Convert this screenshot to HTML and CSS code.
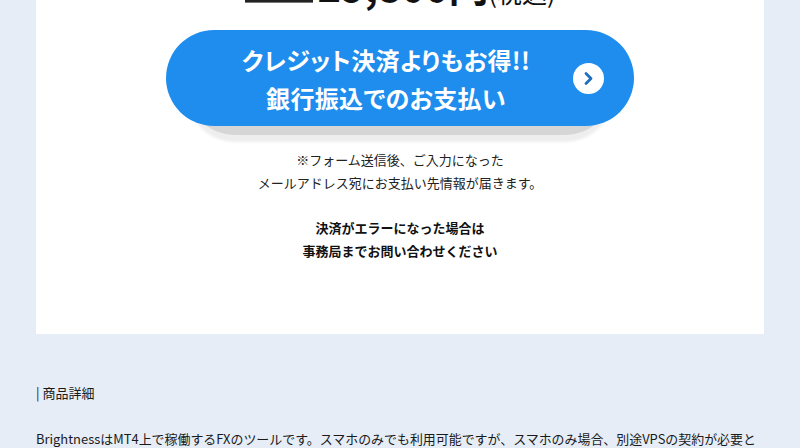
FILE: index.html
```html
<!DOCTYPE html>
<html lang="ja">
<head>
<meta charset="utf-8">
<title>商品詳細</title>
<link rel="stylesheet" href="styles.css">
</head>
<body>
<main class="page">
  <section class="card">
    <p class="price"><span class="price-label"></span><span class="price-num">29,800円</span><span class="price-tax">(税込)</span></p>
    <a class="cta" href="#">
      <span class="cta-text">クレジット決済よりもお得!!<br>銀行振込でのお支払い</span>
      <svg class="cta-icon" viewBox="0 0 31 31" width="31" height="31" aria-hidden="true">
        <circle cx="15.5" cy="15.5" r="15.5" fill="#fff"/>
        <path d="M13 10.5l5 5-5 5" fill="none" stroke="#1e6fc0" stroke-width="2.8" stroke-linecap="round" stroke-linejoin="round"/>
      </svg>
    </a>
    <p class="note">※フォーム送信後、ご入力になった<br>メールアドレス宛にお支払い先情報が届きます。</p>
    <p class="note note-strong">決済がエラーになった場合は<br>事務局までお問い合わせください</p>
  </section>
  <section class="details">
    <h2 class="details-title">| 商品詳細</h2>
    <p class="details-text">BrightnessはMT4上で稼働するFXのツールです。スマホのみでも利用可能ですが、スマホのみ場合、別途VPSの契約が必要となります。</p>
  </section>
</main>
</body>
</html>
```

FILE: styles.css
```css
html, body {
  margin: 0;
  height: 448px;
  overflow: hidden;
  background: #e6edf7;
}
body {
  font-family: "Noto Sans CJK JP", "Noto Sans", sans-serif;
  color: #1a1a1a;
}
.page {
  margin-top: -24px;
  padding: 0 36px;
}
.card {
  background: #fff;
  height: 358px;
  display: flex;
  flex-direction: column;
  align-items: center;
  isolation: isolate;
}
.price {
  margin: 0;
  height: 54px;
  display: flex;
  align-items: flex-end;
  box-sizing: border-box;
  padding-bottom: 25px;
  font-weight: 700;
  white-space: nowrap;
  color: #111;
  line-height: 1;
}
.price-label {
  width: 68px;
  height: 12px;
  margin: 0 5px 2px 0;
  background: #222;
  border-bottom: 1px solid #777;
  box-sizing: border-box;
}
.price-num {
  font-size: 40px;
}
.price-tax {
  font-size: 25px;
  font-weight: 400;
}
.cta {
  position: relative;
  width: 468px;
  height: 96px;
  box-sizing: border-box;
  border-radius: 48px;
  background: #1e8ded;
  color: #fff;
  text-decoration: none;
  display: flex;
  align-items: center;
  padding: 0 30px 0 0;
}
.cta::before {
  content: "";
  position: absolute;
  z-index: -1;
  left: 21px;
  right: 21px;
  top: 9px;
  height: 96px;
  border-radius: 48px;
  background: #d6d6d6;
  box-shadow: 0 7px 3px #eeeeee;
}
.cta-text {
  flex: 1;
  text-align: center;
  font-size: 24px;
  line-height: 38px;
  font-weight: 700;
  font-feature-settings: "palt";
  letter-spacing: 0.35px;
  padding: 2px 0 0 33px;
}
.cta-icon {
  flex: none;
}
.note {
  margin: 22px 0 0;
  font-size: 13px;
  line-height: 23px;
  text-align: center;
  color: #222;
}
.note-strong {
  font-weight: 700;
  color: #111;
}
.details {
  padding-top: 48px;
}
.details-title {
  margin: 0;
  font-size: 13px;
  line-height: 22px;
  font-weight: 400;
}
.details-text {
  margin: 23px 0 0;
  font-size: 12.95px;
  line-height: 24px;
}
```
